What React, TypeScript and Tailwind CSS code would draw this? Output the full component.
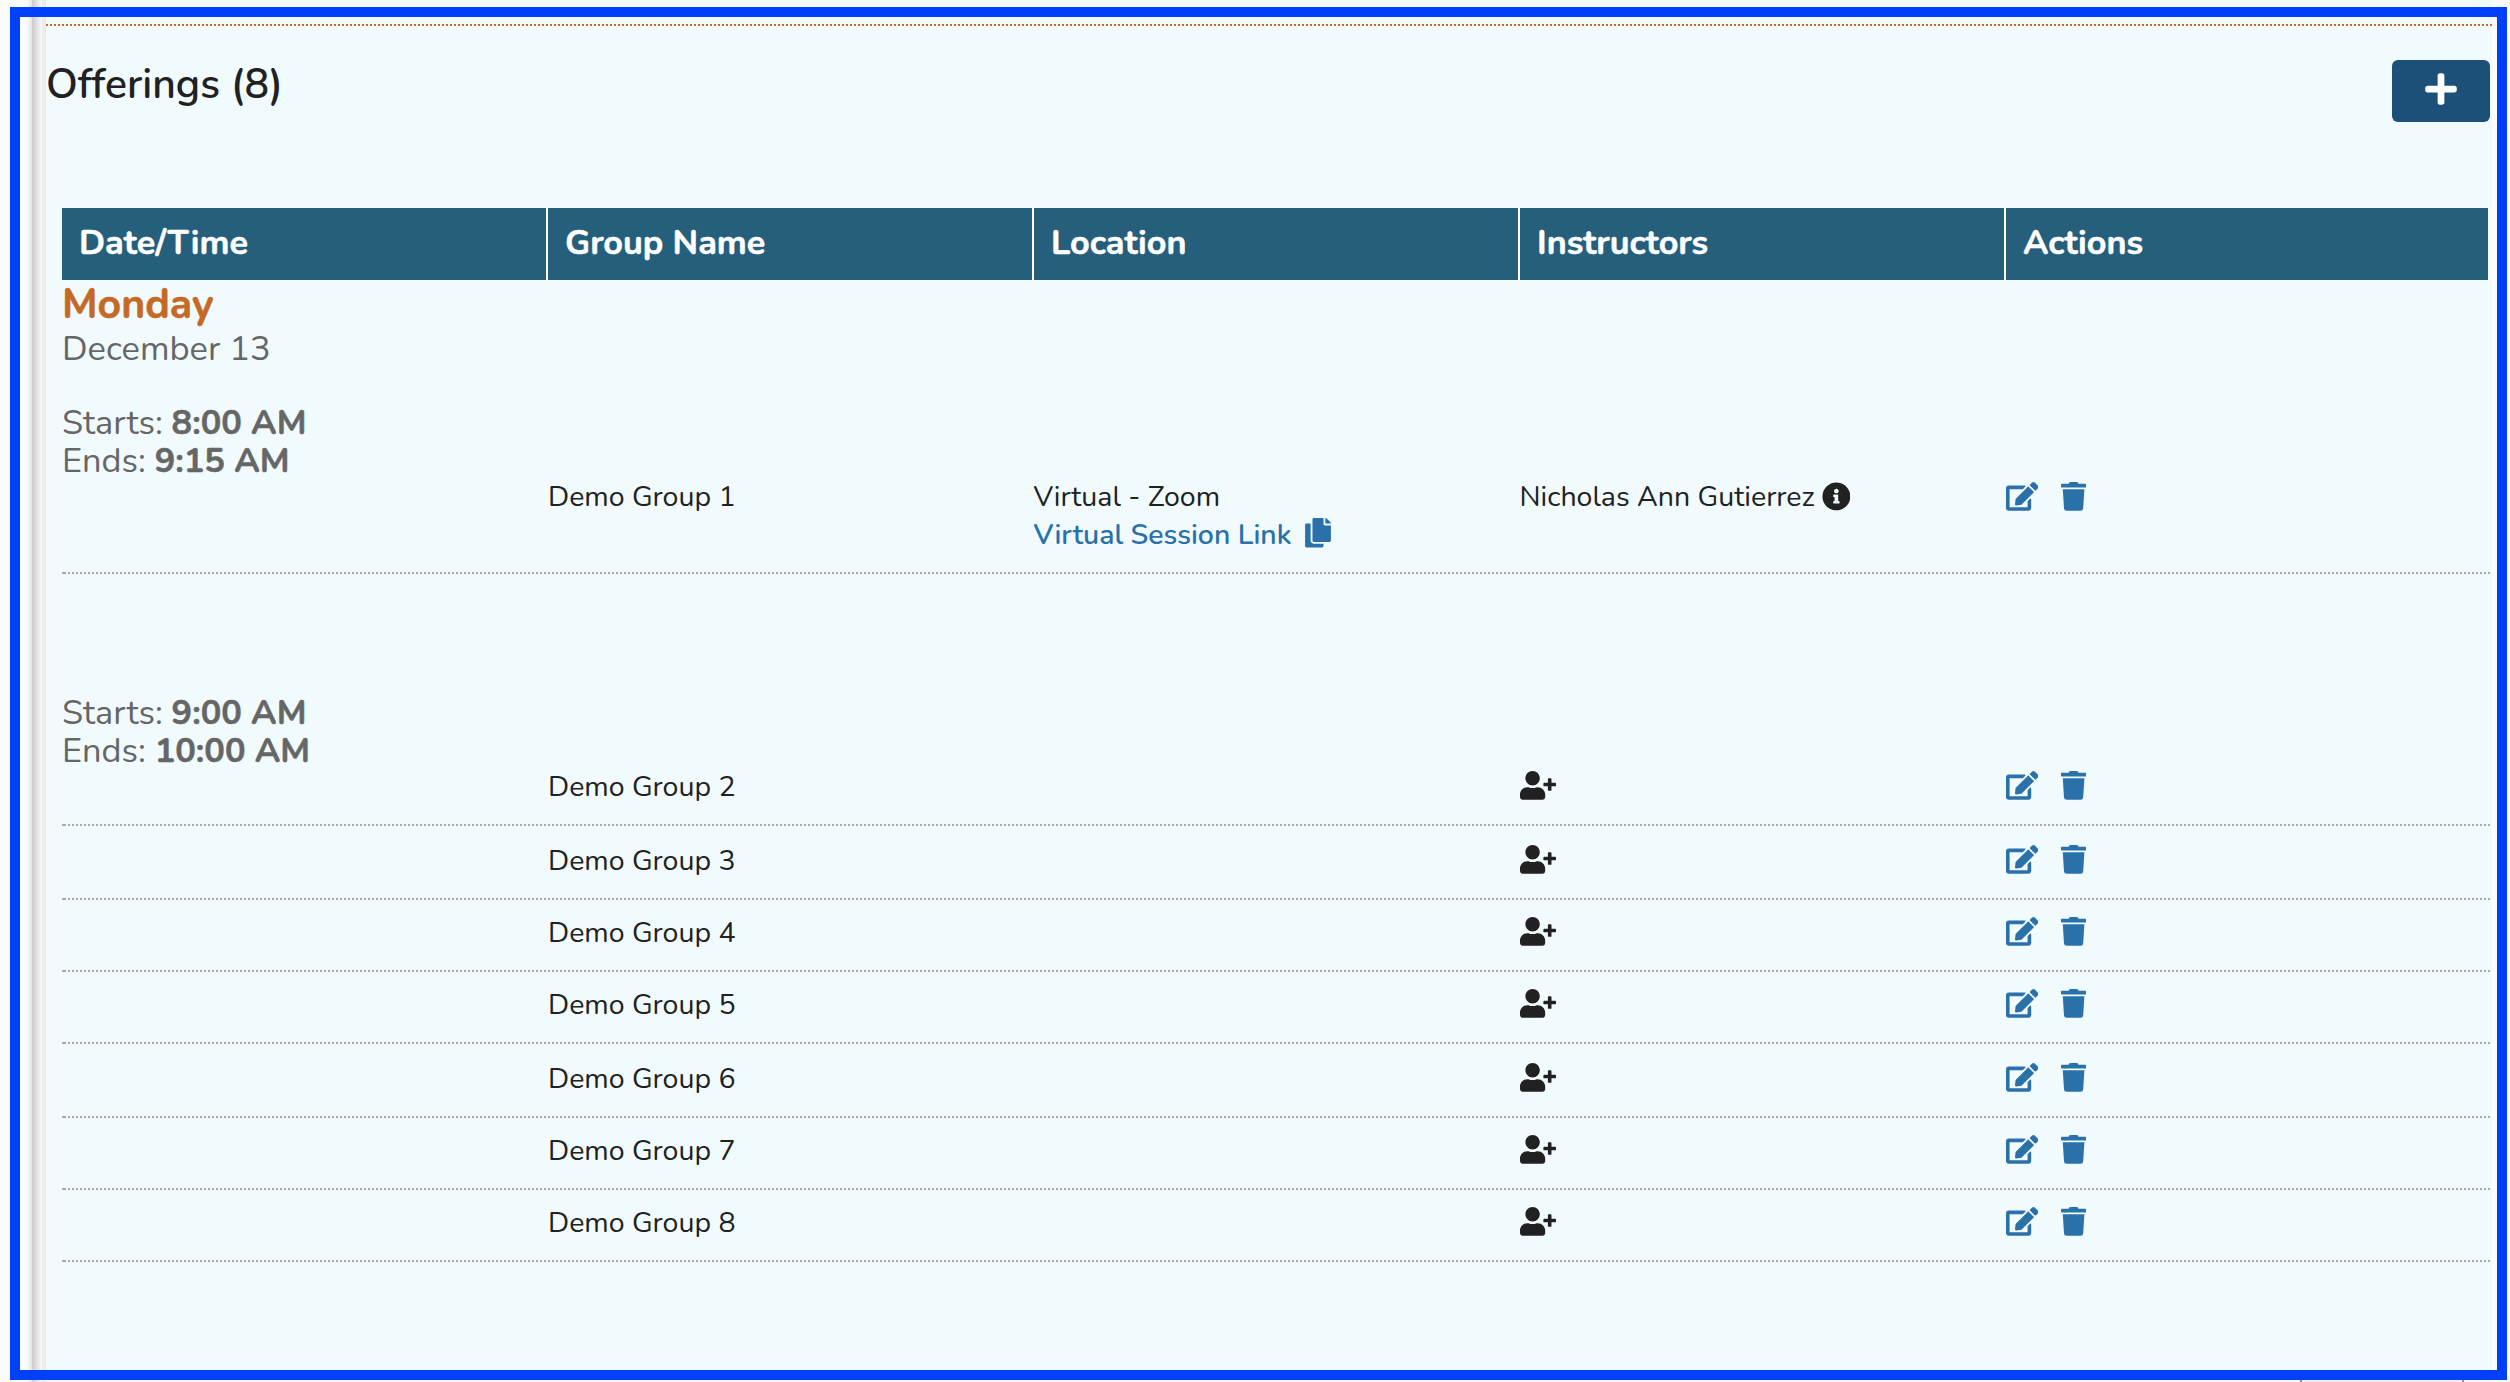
import React from 'react';
import { FaPlus, FaInfoCircle, FaUserPlus, FaEdit, FaTrash, FaCopy } from 'react-icons/fa';

const columns = ['Date/Time', 'Group Name', 'Location', 'Instructors', 'Actions'];

const laterGroups = [
  { name: 'Demo Group 2', height: 'h-[57px]' },
  { name: 'Demo Group 3', height: 'h-[72px]' },
  { name: 'Demo Group 4', height: 'h-[70px]' },
  { name: 'Demo Group 5', height: 'h-[70px]' },
  { name: 'Demo Group 6', height: 'h-[72px]' },
  { name: 'Demo Group 7', height: 'h-[70px]' },
  { name: 'Demo Group 8', height: 'h-[70px]' },
];

function RowRule() {
  return (
    <div className="flex h-[2px]">
      <div className="w-[2px] bg-[#a6a9aa]" />
      <div className="flex-1 bg-[repeating-linear-gradient(90deg,#a6a9aa_0px,#a6a9aa_2px,transparent_2px,transparent_4px)]" />
    </div>
  );
}

function Actions() {
  return (
    <div className="flex h-[38px] items-start pt-[4px] text-[#2a70a9]">
      <FaEdit className="h-[28.8px] w-[32.4px]" />
      <FaTrash className="ml-[22.8px] h-[28.8px] w-[25.2px]" />
    </div>
  );
}

function Times({ starts, ends }: { starts: string; ends: string }) {
  return (
    <div className="text-[34.3px] leading-[38px] text-[#666]">
      <div>
        Starts: <b className="font-bold [-webkit-text-stroke:0.5px]">{starts}</b>
      </div>
      <div>
        Ends: <b className="font-bold [-webkit-text-stroke:0.5px]">{ends}</b>
      </div>
    </div>
  );
}

export default function App() {
  return (
    <div className="relative flex h-[1382px] w-[2510px] overflow-hidden bg-[#fcfcfc] font-[Nunito,'Open_Sans',sans-serif] text-[#212121]">
      <div className="w-[27px]" />
      <div className="w-[5px] bg-linear-to-r from-[#fcfcfc] to-[#e4e4e4]" />
      <div className="w-[10px] bg-linear-to-r from-[#cbcbcb] to-[#fafafa]" />
      <div className="w-[4px] bg-[#ececec]" />
      <main className="flex w-[2446px] flex-col bg-[#f1fbfe] pt-[24px]">
        <div className="h-[2px] shrink-0 bg-[repeating-linear-gradient(90deg,#c46a26_0px,#c46a26_2px,transparent_2px,transparent_4px)]" />
        <div className="flex h-[182px] shrink-0 items-start justify-between pr-[2px] pt-[33px]">
          <h2 className="text-[41px] font-semibold leading-[52px]">Offerings (8)</h2>
          <button className="mt-[1px] flex h-[62px] w-[98px] items-center justify-center rounded-[6px] bg-[#1c5078] pb-[4px] text-white">
            <FaPlus className="h-[36px] w-[32px]" />
          </button>
        </div>

        <section className="ml-[16px] w-[2428px]">
          <div className="grid h-[72px] grid-cols-[486px_486px_486px_486px_484px]">
            {columns.map((c) => (
              <div
                key={c}
                className="border-r-2 border-white bg-[#265f7c] pl-[17px] text-[34.2px] font-bold leading-[69px] text-white [-webkit-text-stroke:0.5px]"
              >
                {c}
              </div>
            ))}
          </div>

          <div className="text-[41px] font-bold leading-[49px] text-[#c46a26] [-webkit-text-stroke:0.5px]">Monday</div>
          <div className="mb-[36px] text-[34.5px] leading-[39px] text-[#666]">December 13</div>
          <Times starts="8:00 AM" ends="9:15 AM" />
          <div className="-mt-[2px] grid h-[94px] grid-cols-[486px_486px_486px_486px_484px] text-[28.5px] leading-[38px]">
            <div />
            <div>Demo Group 1</div>
            <div className="-ml-[0.5px]">
              <div>Virtual - Zoom</div>
              <div className="flex text-[28.4px] font-semibold text-[#2a70a9]">
                Virtual Session Link
                <FaCopy className="ml-[14px] mt-[2px] h-[29.5px] w-[26px]" />
              </div>
            </div>
            <div className="-ml-[0.5px] flex">
              Nicholas Ann Gutierrez
              <FaInfoCircle className="ml-[7px] mt-[4px] h-[28.8px] w-[28.8px]" />
            </div>
            <Actions />
          </div>
          <RowRule />

          <div className="pt-[120px]">
            <Times starts="9:00 AM" ends="10:00 AM" />
          </div>
          <div className="-mt-[3px]">
            {laterGroups.map((g) => (
              <div key={g.name}>
                <div
                  className={`${g.height} grid grid-cols-[486px_486px_486px_486px_484px] items-end pb-[19px] text-[28.5px] leading-[38px]`}
                >
                  <div />
                  <div className="-mb-[1px]">{g.name}</div>
                  <div />
                  <div className="h-[38px] pt-[4px]">
                    <FaUserPlus className="h-[28.8px] w-[36px]" />
                  </div>
                  <Actions />
                </div>
                <RowRule />
              </div>
            ))}
          </div>
        </section>
      </main>
      <div className="absolute left-[2300px] top-[1380px] h-[2px] w-[164px] border-x-2 border-[#8f9699] bg-[#f3eeec]" />
      <div className="pointer-events-none absolute left-[10px] top-[7px] h-[1373px] w-[2497px] border-[10px] border-[#0040f8]" />
    </div>
  );
}
